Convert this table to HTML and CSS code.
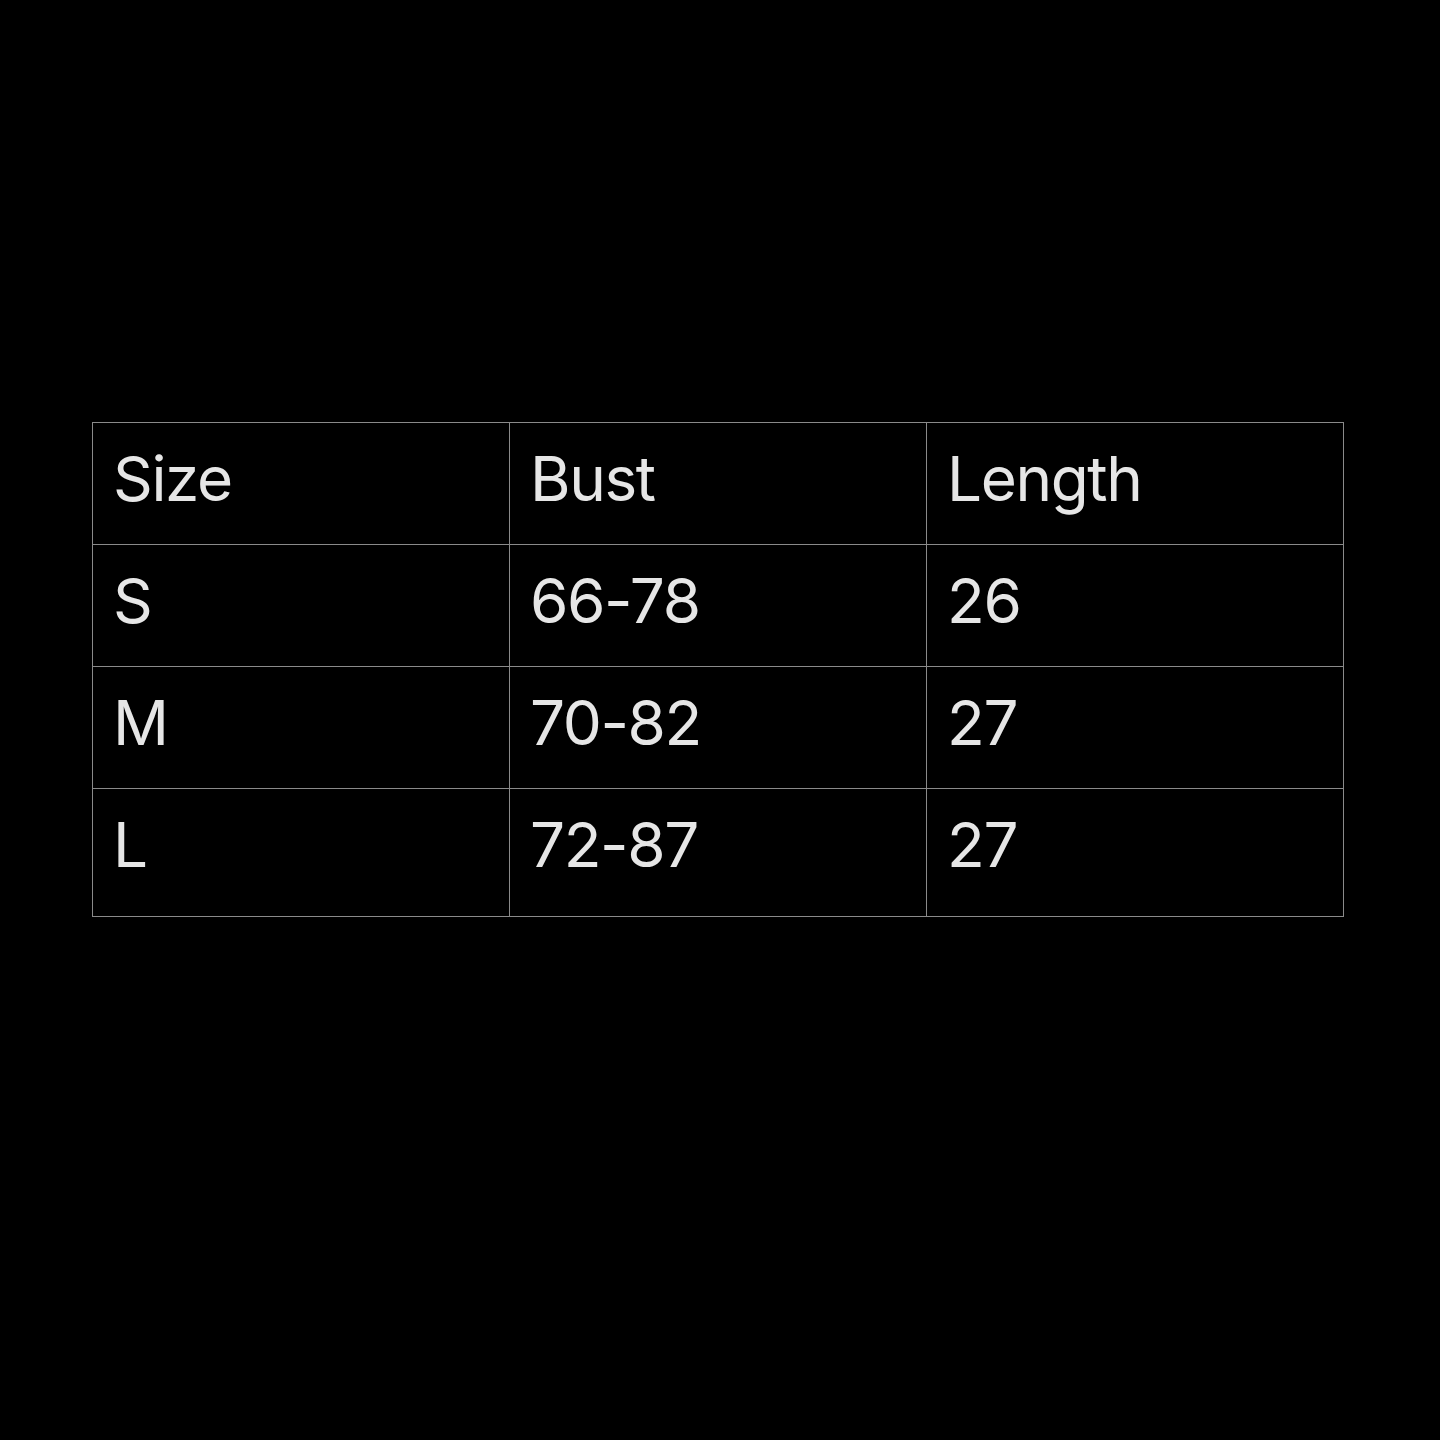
FILE: index.html
```html
<!DOCTYPE html>
<html>
<head>
<meta charset="utf-8">
<link rel="stylesheet" href="styles.css">
</head>
<body>
<main class="page">
  <table class="size-table">
    <tr class="row"><td>Size</td><td>Bust</td><td>Length</td></tr>
    <tr class="row"><td>S</td><td>66-78</td><td>26</td></tr>
    <tr class="row"><td>M</td><td>70-82</td><td>27</td></tr>
    <tr class="row row-last"><td>L</td><td>72-87</td><td>27</td></tr>
  </table>
</main>
</body>
</html>
```
FILE: styles.css
```css
html, body {
  margin: 0;
  padding: 0;
  background: #000;
}
.page {
  width: 1440px;
  height: 1440px;
  padding: 422px 0 0 92px;
  box-sizing: border-box;
}
.size-table {
  border-collapse: collapse;
  width: 1252px;
  table-layout: fixed;
  font-family: Inter, "Noto Sans", sans-serif;
  font-size: 62px;
  color: #e6e6e6;
}
.size-table td {
  border: 1px solid #8a8a8a;
  height: 122px;
  box-sizing: border-box;
  padding: 19px 0 0 20px;
  vertical-align: top;
  line-height: 1.2;
  letter-spacing: -1.4px;
}
.row-last td {
  height: 128px;
}
```
